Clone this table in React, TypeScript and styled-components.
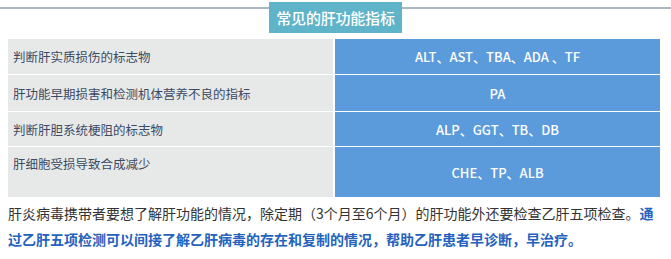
import React from 'react'
import styled, {createGlobalStyle} from 'styled-components'

const GlobalStyle = createGlobalStyle`
  html, body {
    margin: 0;
    padding: 0;
    background: #ffffff;
  }
  body {
    font-family: "Noto Sans CJK SC", "Noto Sans", sans-serif;
    color: #333333;
    text-spacing-trim: space-all;
    font-feature-settings: "chws" 0, "halt" 0, "palt" 0;
  }
`

const Page = styled.div`
  width: 671px;
  height: 259px;
  overflow: hidden;
`

const Header = styled.div`
  display: flex;
  align-items: flex-start;
  padding-top: 2px;
`

const Rule = styled.div`
  flex: 1;
  height: 1.5px;
  margin-top: 5px;
  background: #a9b7c5;
`

const Title = styled.div`
  width: 133px;
  height: 31px;
  display: flex;
  align-items: center;
  justify-content: center;
  background: #5fb4c9;
  color: #ffffff;
  font-size: 15px;
  font-weight: 500;
  letter-spacing: -0.2px;
`

const Table = styled.div`
  margin: 6px 11px 0 8px;
  display: grid;
  grid-template-columns: 325px 325px;
  grid-template-rows: 35px 36px 34px 50px;
  column-gap: 2px;
  row-gap: 1px;
`

const Cell = styled.div<{$kind: 'label' | 'value'; $top?: boolean}>`
  display: flex;
  align-items: ${p => (p.$top ? 'flex-start' : 'center')};
  justify-content: ${p => (p.$kind === 'value' ? 'center' : 'flex-start')};
  padding: ${p => (p.$kind === 'value' ? '0' : p.$top ? '7px 0 0 5px' : '0 0 0 5px')};
  background: ${p => (p.$kind === 'value' ? '#5b9bdc' : '#e7e9e9')};
  color: ${p => (p.$kind === 'value' ? '#ffffff' : '#3d4a63')};
  font-size: ${p => (p.$kind === 'value' ? '13px' : '12.5px')};
  font-weight: ${p => (p.$kind === 'value' ? 500 : 400)};
`

const Paragraph = styled.p`
  margin: 3px 8px 0 8px;
  font-size: 14px;
  line-height: 26px;
  color: #333333;
`

const Highlight = styled.strong`
  color: #2462c0;
  font-weight: 700;
`

const rows = [
  {label: '判断肝实质损伤的标志物', value: 'ALT、AST、TBA、ADA 、TF'},
  {label: '肝功能早期损害和检测机体营养不良的指标', value: 'PA'},
  {label: '判断肝胆系统梗阻的标志物', value: 'ALP、GGT、TB、DB'},
  {label: '肝细胞受损导致合成减少', value: 'CHE、TP、ALB', top: true},
]

const App = (): JSX.Element => (
  <Page>
    <GlobalStyle />
    <Header>
      <Rule />
      <Title>常见的肝功能指标</Title>
      <Rule />
    </Header>
    <Table>
      {rows.map(row => (
        <React.Fragment key={row.label}>
          <Cell $kind='label' $top={row.top}>{row.label}</Cell>
          <Cell $kind='value'>{row.value}</Cell>
        </React.Fragment>
      ))}
    </Table>
    <Paragraph>
      肝炎病毒携带者要想了解肝功能的情况，除定期（3个月至6个月）的肝功能外还要检查乙肝五项检查。
      <Highlight>通过乙肝五项检测可以间接了解乙肝病毒的存在和复制的情况，帮助乙肝患者早诊断，早治疗。</Highlight>
    </Paragraph>
  </Page>
)

export default App
